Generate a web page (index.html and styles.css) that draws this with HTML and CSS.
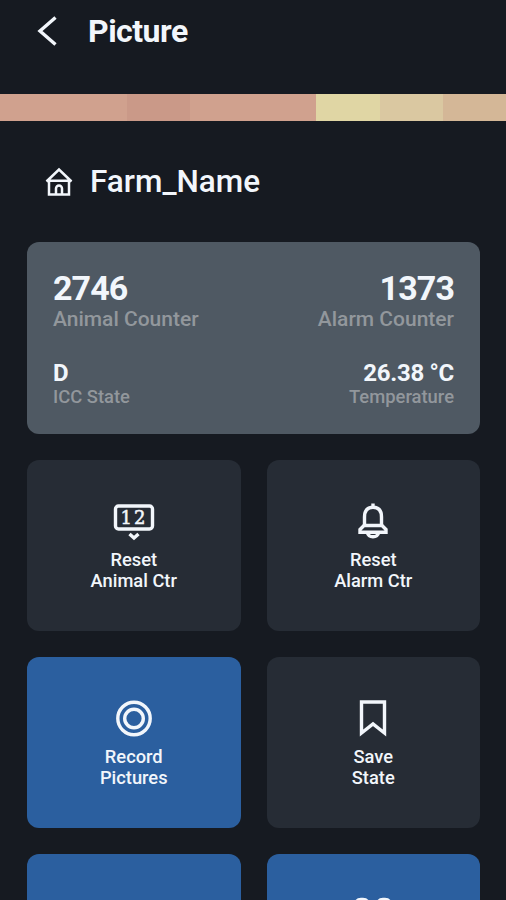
FILE: index.html
```
<!DOCTYPE html>
<html lang="en">
<head>
    <meta charset="UTF-8">
    <title>Picture</title>
    <link rel="stylesheet" href="styles.css">
</head>
<body>
    <div id="screen">
        <div class="header">
            <svg class="back" width="22" height="34" viewBox="0 0 22 34">
                <path d="M20.5 3.5 L5 17 L20.5 30.5"/>
            </svg>
            <h1>Picture</h1>
        </div>
        <ul class="strip">
            <li class="pink"></li>
            <li class="pink"></li>
            <li class="rose"></li>
            <li class="pink"></li>
            <li class="pink"></li>
            <li class="yellow"></li>
            <li class="sand"></li>
            <li class="tan"></li>
        </ul>
        <div class="farm">
            <svg width="28" height="30" viewBox="0 0 28 30">
                <path d="M1.5 14.5 L14 2.5 L26.5 14.5 M1.5 13.8 H26.5 M4 14 V27.5 H24 V14"/>
                <path d="M11 27 V21.5 A3 3 0 0 1 17 21.5 V27"/>
            </svg>
            <h2>Farm_Name</h2>
        </div>
        <div class="info">
            <div class="row big">
                <div class="cell">
                    <strong>2746</strong>
                    <span>Animal Counter</span>
                </div>
                <div class="cell right">
                    <strong>1373</strong>
                    <span>Alarm Counter</span>
                </div>
            </div>
            <div class="row small">
                <div class="cell">
                    <strong>D</strong>
                    <span>ICC State</span>
                </div>
                <div class="cell right">
                    <strong>26.38 °C</strong>
                    <span>Temperature</span>
                </div>
            </div>
        </div>
        <div class="btns">
            <div class="btn">
                <svg width="44" height="44" viewBox="0 0 44 44">
                    <rect x="3.5" y="7" width="37" height="23" rx="3"/>
                    <path d="M17.5 35 L22 39 L26.5 35"/>
                    <text x="8.5" y="25">1</text>
                    <text x="22" y="25">2</text>
                </svg>
                <p>Reset<br>Animal Ctr</p>
            </div>
            <div class="btn">
                <svg width="44" height="44" viewBox="0 0 44 44">
                    <path d="M22 4.5 V8 M13.5 27 V18 C13.5 11 17 8.2 22 8.2 C27 8.2 30.5 11 30.5 18 V27"/>
                    <path d="M13 26.5 L9 30.5 V33.3 H35 V30.5 L31 26.5 Z"/>
                    <path d="M16.5 34 C17.5 39 26.5 39 27.5 34"/>
                </svg>
                <p>Reset<br>Alarm Ctr</p>
            </div>
            <div class="btn selected">
                <svg width="44" height="44" viewBox="0 0 44 44">
                    <circle cx="22" cy="22.5" r="16.2"/>
                    <circle cx="22" cy="22.5" r="9.3"/>
                </svg>
                <p>Record<br>Pictures</p>
            </div>
            <div class="btn">
                <svg width="44" height="44" viewBox="0 0 44 44">
                    <path d="M10.5 6 H33.5 V37 L22 28 L10.5 37 Z"/>
                </svg>
                <p>Save<br>State</p>
            </div>
            <div class="btn selected"></div>
            <div class="btn selected">
                <svg width="44" height="44" viewBox="0 0 44 44">
                    <path d="M5 32 V12 Q5 6.5 10 6.5 H12 Q17 6.5 17 12 V32 Z M27 32 V12 Q27 6.5 32 6.5 H34 Q39 6.5 39 12 V32 Z M17 18 H27"/>
                </svg>
            </div>
        </div>
    </div>
</body>
</html>
```
FILE: styles.css
```
*{
    margin: 0;
    padding: 0;
    box-sizing: border-box;
}
ul{
    list-style: none;
}
body{
    background: #161a21;
    color: #f2f6fb;
    font-family: Roboto, "Liberation Sans", sans-serif;
}
#screen{
    height: 900px;
    overflow: hidden;
}
svg{
    fill: none;
    stroke: #f2f6fb;
    stroke-width: 3.4;
    flex: none;
}
.header{
    height: 94px;
    padding: 14px 0 0 35px;
    display: flex;
    align-items: flex-start;
}
.header h1{
    margin-left: 31px;
    font-size: 32px;
    line-height: 35px;
    font-weight: 700;
    letter-spacing: -0.5px;
}
.strip{
    display: flex;
    height: 27px;
}
.strip li{
    flex: 1;
}
.pink{
    background: #d0a18e;
}
.rose{
    background: #ca9988;
}
.yellow{
    background: #e0d6a4;
}
.sand{
    background: #dac8a1;
}
.tan{
    background: #d4b797;
}
.farm{
    height: 121px;
    padding: 0 45px;
    display: flex;
    align-items: center;
}
.farm svg{
    stroke-width: 2.5;
}
.farm h2{
    margin-left: 17px;
    font-size: 31.5px;
    line-height: 36px;
    font-weight: 500;
}
.info{
    height: 192px;
    margin: 0 26px 26px 27px;
    padding: 27px 26px;
    background: #4f5963;
    border-radius: 12px;
}
.row{
    display: flex;
    justify-content: space-between;
}
.cell strong,
.cell span{
    display: block;
}
.cell span{
    color: #92979c;
    font-weight: 500;
}
.right{
    text-align: right;
}
.big strong{
    font-size: 34px;
    line-height: 38px;
    letter-spacing: -0.9px;
}
.big span{
    font-size: 21px;
    line-height: 25px;
}
.small{
    margin-top: 28px;
}
.small strong{
    font-size: 24px;
    line-height: 26px;
    letter-spacing: -0.3px;
}
.small span{
    font-size: 18.4px;
    line-height: 22px;
}
.btns{
    display: grid;
    grid-template-columns: 1fr 1fr;
    grid-auto-rows: 171px;
    gap: 26px;
    margin: 0 26px 0 27px;
}
.btn{
    padding-top: 39px;
    display: flex;
    flex-direction: column;
    align-items: center;
    background: #262c35;
    border-radius: 12px;
    text-align: center;
}
.btn.selected{
    background: #2b5f9f;
}
.btn p{
    margin-top: 6px;
    font-size: 18.3px;
    line-height: 21px;
    font-weight: 500;
}
.btn text{
    fill: #f2f6fb;
    stroke: #f2f6fb;
    stroke-width: 0.5;
    font-family: "DejaVu Serif", serif;
    font-size: 18px;
}
```
